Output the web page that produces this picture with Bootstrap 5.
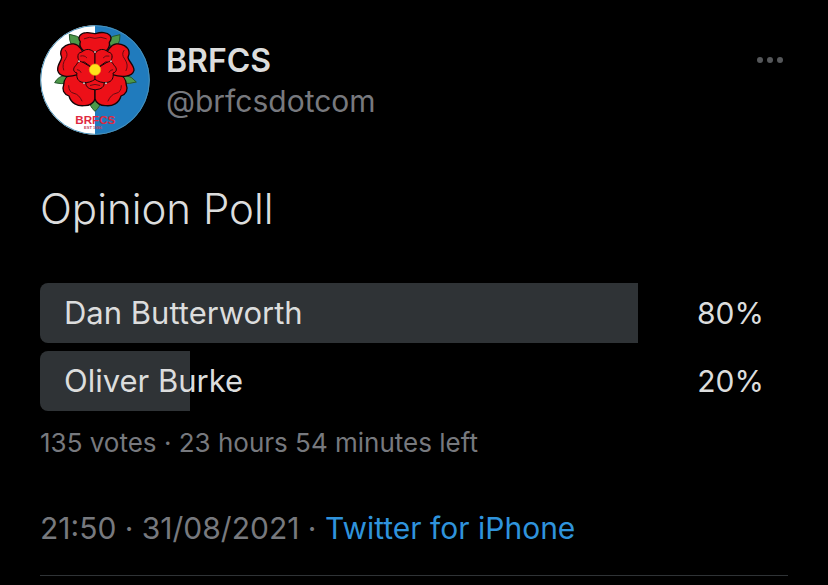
<!DOCTYPE html>
<html lang="en">
<head>
<meta charset="utf-8">
<meta name="viewport" content="width=device-width, initial-scale=1">
<title>BRFCS: Opinion Poll</title>
<link href="https://cdn.jsdelivr.net/npm/bootstrap@5.3.0/dist/css/bootstrap.min.css" rel="stylesheet">
<style>
  body { background: #000; color: #dcdddd; font-family: Inter, "Liberation Sans", sans-serif; font-size: 31px; line-height: 40px; }
  .tweet { padding: 25px 40px 9px; }
  .avatar { width: 110px; height: 110px; }
  .author { font-size: 32px; font-weight: 600; line-height: 40px; }
  .handle { font-size: 30px; }
  .dim { color: #77797e; }
  .more { color: #55575a; padding: 4px; margin-top: 27px; line-height: 0; }
  .headline { font-size: 42px; font-weight: 300; line-height: 56px; margin: 46px 0; }
  .poll { gap: 8px; }
  .choice { height: 60px; padding: 0 24px; isolation: isolate; }
  .fill { z-index: -1; background: #2f3336; border-radius: 8px 0 0 8px; }
  .share { font-size: 30px; }
  .votes { font-size: 26px; line-height: 32px; margin-top: 16px; }
  .meta { font-size: 30px; margin-top: 49px; padding-bottom: 27px; border-bottom: 1px solid #2f3336; }
  .source { color: #2f93dc; }
</style>
<script src="https://cdn.jsdelivr.net/npm/bootstrap@5.3.0/dist/js/bootstrap.bundle.min.js" defer></script>
</head>
<body>
<article class="tweet">
  <header class="d-flex align-items-start">
    <svg class="avatar flex-shrink-0" viewBox="15 15 330 330" role="img" aria-label="BRFCS">
      <path fill="#fff" d="M180 16A164 164 0 0 0 180 344Z"/>
      <path fill="#207bbd" d="M180 16A164 164 0 0 1 180 344Z"/>
      <circle cx="180" cy="180" r="163" fill="none" stroke="#4b91b8" stroke-width="3"/>
      <g fill="#4d9849" stroke="#25572d" stroke-width="3">
        <path d="M180 274C168 262 160 250 163 233L197 233C200 250 192 262 180 274Z"/>
        <path d="M103 43Q128 46 142 60L129 85L110 76Q102 62 103 43Z"/>
        <path d="M255 44Q231 46 218 60L230 85L248 76Q256 62 255 44Z"/>
        <path d="M59 188Q70 168 92 166L110 178L98 190Q78 193 59 188Z"/>
        <path d="M304 186Q290 168 270 166L252 178L264 190Q284 192 304 186Z"/>
      </g>
      <g fill="#ed1018" stroke="#160508" stroke-width="4" stroke-linejoin="round">
        <path d="M180 150L120 158C96 164 86 180 86 195C80 209 86 222 102 228C108 250 128 259 147 257C163 258 178 249 180 236Z"/>
        <path d="M180 150L240 158C264 164 274 180 274 195C280 209 274 222 258 228C252 250 232 259 213 257C197 258 182 249 180 236Z"/>
        <path d="M180 150L136 84C126 70 108 68 92 77C76 86 74 101 80 112C79 124 66 134 68 151C73 171 99 173 128 164Z"/>
        <path d="M180 150L224 84C234 70 252 68 268 77C284 86 285 101 279 112C280 124 297 134 297 151C292 171 261 173 232 164Z"/>
        <path d="M180 150L146 92C134 83 133 73 136 65C126 51 136 39 154 38C166 36 173 43 184 40C197 36 216 36 225 46C232 56 227 62 223 67C225 78 221 85 214 92Z"/>
        <g stroke-width="3">
          <path d="M180 149L157 179C147 193 156 204 168 207Q180 212 193 207C207 203 212 190 202 179Z"/>
          <path d="M180 149L139 124C129 122 126 133 120 139C112 149 117 157 126 159C123 173 130 186 143 187C159 190 171 184 180 178Z"/>
          <path d="M180 149L221 124C231 122 234 133 240 139C248 149 243 157 234 159C237 173 230 186 217 187C201 190 189 184 180 178Z"/>
          <path d="M180 149L148 126C136 128 127 119 129 107C130 96 139 99 146 92C158 84 174 90 180 101Z"/>
          <path d="M180 149L212 126C224 128 233 119 231 107C230 96 221 99 214 92C202 84 186 90 180 101Z"/>
        </g>
      </g>
      <path fill="none" stroke="#650b12" stroke-width="3" stroke-linecap="round" d="M148 56Q164 48 180 55Q198 48 214 56M91 91Q101 102 92 116Q80 132 86 150M267 91Q258 103 269 117Q282 135 273 152M101 197Q101 217 117 220Q132 223 141 243M259 197Q259 217 243 220Q228 223 219 243M137 108Q149 105 155 113M222 108Q211 105 205 113M127 149Q135 149 138 157M233 149Q225 149 222 157M166 196Q180 190 194 196"/>
      <g fill="#fff" stroke="#1f1515" stroke-width="1"><circle cx="132" cy="124" r="3"/><circle cx="228" cy="124" r="3"/><circle cx="180" cy="96" r="3"/><circle cx="147" cy="190" r="3"/><circle cx="213" cy="190" r="3"/></g>
      <circle cx="180" cy="149" r="17" fill="#ffe21a" stroke="#f3a915" stroke-width="2"/>
      <text x="181" y="311" text-anchor="middle" font-family="Liberation Sans, sans-serif" font-size="35" font-weight="700" fill="#df2940">BRFCS</text>
      <text x="174" y="326" text-anchor="middle" font-family="Liberation Sans, sans-serif" font-size="12" font-weight="700" fill="#c53b59">EST 1996</text>
    </svg>
    <div class="flex-grow-1 ms-3 pt-3">
      <div class="author">BRFCS</div>
      <div class="handle dim">@brfcsdotcom</div>
    </div>
    <button type="button" class="more btn border-0" aria-label="More options">
      <svg width="28" height="8" viewBox="0 0 28 8" fill="currentColor" aria-hidden="true"><circle cx="4" cy="4" r="3"/><circle cx="14" cy="4" r="3"/><circle cx="24" cy="4" r="3"/></svg>
    </button>
  </header>
  <h1 class="headline">Opinion Poll</h1>
  <section class="poll d-flex flex-column" aria-label="Poll results">
    <div class="choice position-relative d-flex align-items-center justify-content-between">
      <div class="fill position-absolute top-0 start-0 h-100" style="width:80%"></div>
      <span>Dan Butterworth</span><span class="share">80%</span>
    </div>
    <div class="choice position-relative d-flex align-items-center justify-content-between">
      <div class="fill position-absolute top-0 start-0 h-100" style="width:20%"></div>
      <span>Oliver Burke</span><span class="share">20%</span>
    </div>
  </section>
  <div class="votes dim">135 votes · 23 hours 54 minutes left</div>
  <footer class="meta dim">21:50 · 31/08/2021 · <a href="#" class="source text-decoration-none">Twitter for iPhone</a></footer>
</article>
</body>
</html>
